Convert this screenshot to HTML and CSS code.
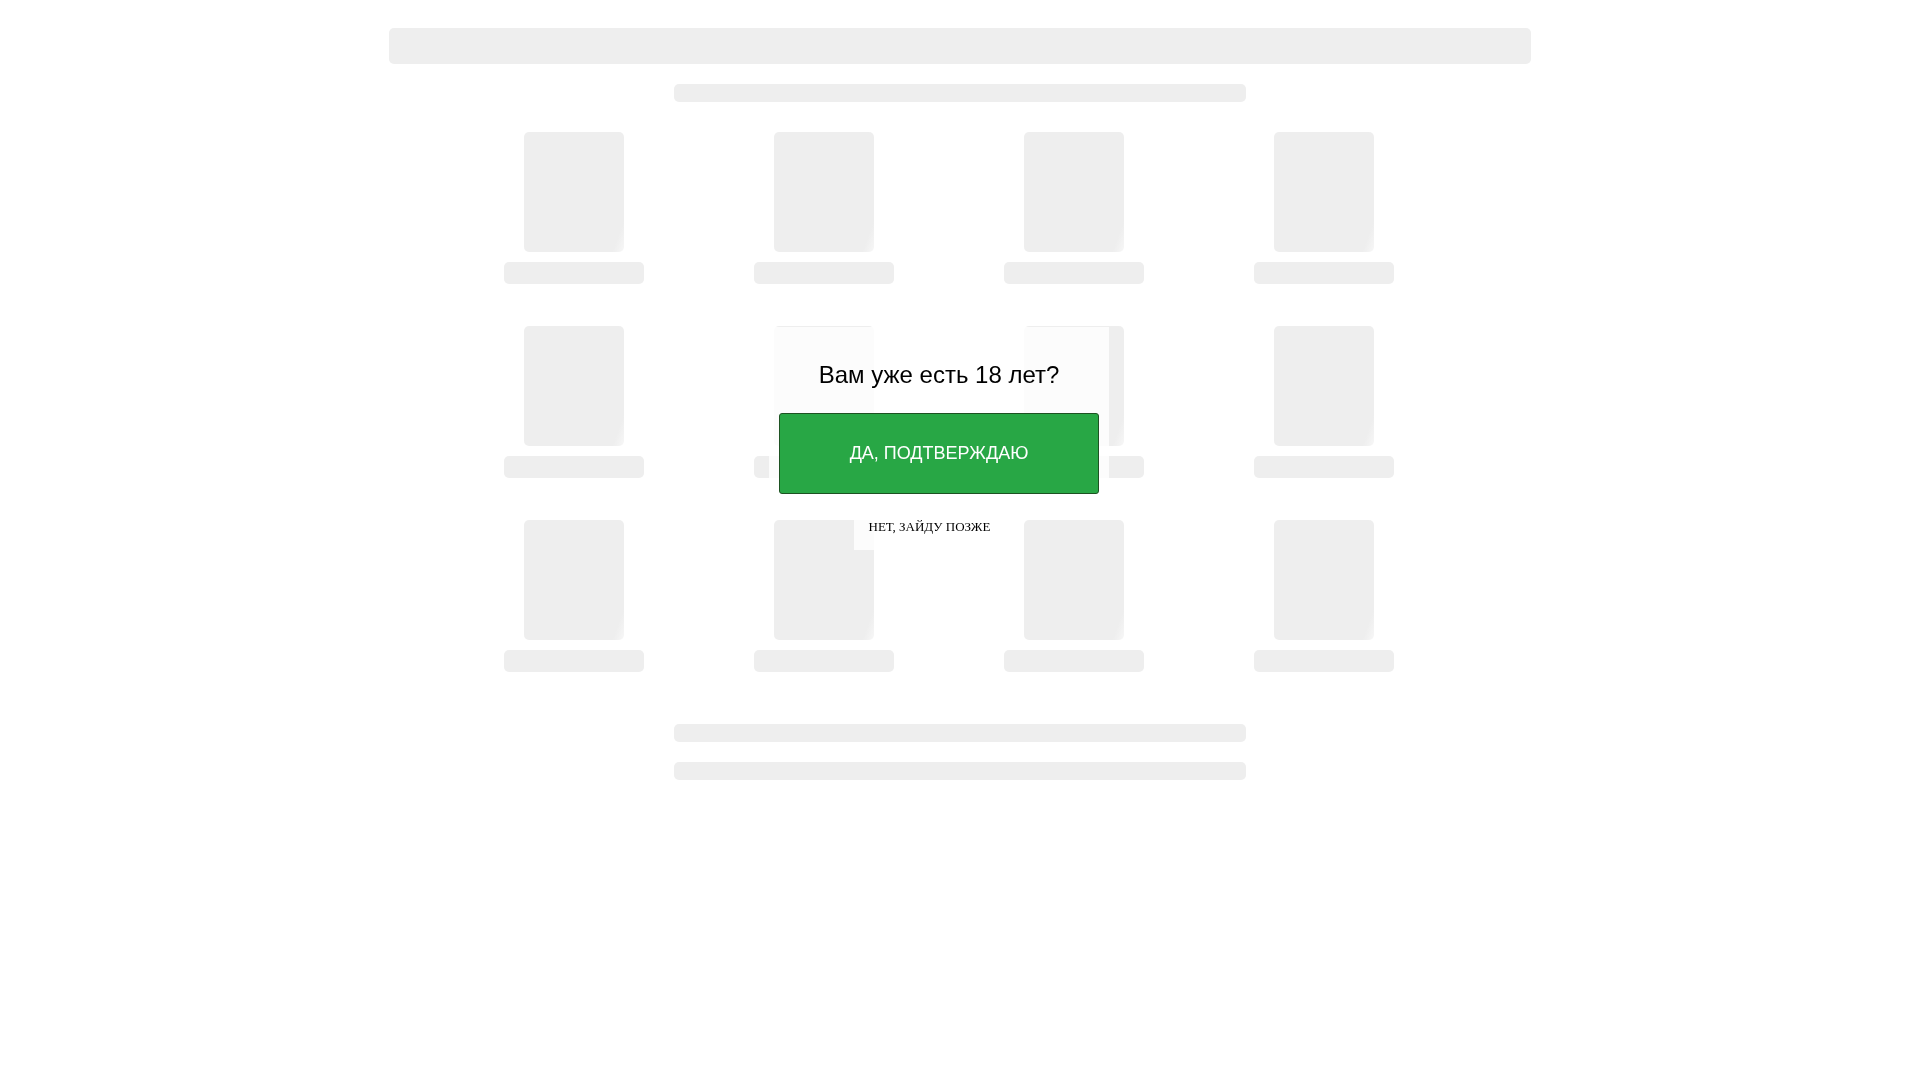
FILE: index.html
```html
<!DOCTYPE html>
<html lang="ru">
<head>
<meta charset="utf-8">
<meta name="viewport" content="width=device-width, initial-scale=1">
<title>Подтверждение возраста</title>
<link rel="stylesheet" href="styles.css">
</head>
<body>
<main class="page" aria-hidden="true">
  <div class="bone header-bar"></div>
  <div class="bone text-bar"></div>
  <div class="cards">
    <div class="card"><div class="bone thumb"></div><div class="bone label"></div></div>
    <div class="card"><div class="bone thumb"></div><div class="bone label"></div></div>
    <div class="card"><div class="bone thumb"></div><div class="bone label"></div></div>
    <div class="card"><div class="bone thumb"></div><div class="bone label"></div></div>
    <div class="card"><div class="bone thumb"></div><div class="bone label"></div></div>
    <div class="card"><div class="bone thumb"></div><div class="bone label"></div></div>
    <div class="card"><div class="bone thumb"></div><div class="bone label"></div></div>
    <div class="card"><div class="bone thumb"></div><div class="bone label"></div></div>
    <div class="card"><div class="bone thumb"></div><div class="bone label"></div></div>
    <div class="card"><div class="bone thumb"></div><div class="bone label"></div></div>
    <div class="card"><div class="bone thumb"></div><div class="bone label"></div></div>
    <div class="card"><div class="bone thumb"></div><div class="bone label"></div></div>
  </div>
  <div class="bone text-bar"></div>
  <div class="bone text-bar"></div>
</main>
<section class="age-gate" role="dialog" aria-labelledby="age-title">
  <div class="panel">
    <h1 class="title" id="age-title">Вам уже есть 18 лет?</h1>
    <button class="confirm" type="button">ДА, ПОДТВЕРЖДАЮ</button>
  </div>
  <button class="decline" type="button">НЕТ, ЗАЙДУ ПОЗЖЕ</button>
</section>
</body>
</html>
```

FILE: styles.css
```css
* {
  box-sizing: border-box;
}

body {
  margin: 8px;
  background: #fff;
}

.page {
  display: flex;
  flex-direction: column;
  align-items: center;
  gap: 20px;
  padding: 20px 0;
}

.bone {
  border-radius: 5px;
  background: #eee;
}

.header-bar {
  width: 60%;
  height: 36px;
}

.text-bar {
  width: 30%;
  height: 18px;
}

.cards {
  display: grid;
  grid-template-columns: repeat(4, 1fr);
  gap: 42px 22px;
  width: 100%;
  max-width: 1000px;
  padding: 10px 22px 32px 0;
}

.card {
  display: flex;
  flex-direction: column;
  align-items: center;
  gap: 10px;
}

.thumb {
  width: 100px;
  height: 120px;
  background: linear-gradient(110deg, #eee 92%, #f7f7f7 100%);
}

.label {
  width: 140px;
  height: 22px;
}

/* Age question, shown over the loading page */
.age-gate {
  position: fixed;
  top: 327px;
  left: calc(50% - 191px);
  width: 340px;
  display: flex;
  flex-direction: column;
  align-items: center;
}

.panel {
  width: 100%;
  padding: 32px 10px 10px;
  background: rgba(255, 255, 255, 0.8);
}

.title {
  margin: 0 0 22px;
  font: 24px/32px "Liberation Sans", Arial, sans-serif;
  text-align: center;
  color: #000;
}

.confirm {
  display: block;
  width: 100%;
  height: 81px;
  padding: 0 0 2px;
  border: 1px solid #1d5222;
  border-radius: 3px;
  background: #28a745;
  color: #fff;
  font: 18px/24px "Liberation Sans", Arial, sans-serif;
  cursor: pointer;
}

.decline {
  margin: 6px 19px 0 0;
  padding: 9px 15px 16px;
  border: 0;
  background: rgba(255, 255, 255, 0.8);
  color: #000;
  font: 13px/15px "Liberation Serif", "Times New Roman", serif;
  cursor: pointer;
}
```
